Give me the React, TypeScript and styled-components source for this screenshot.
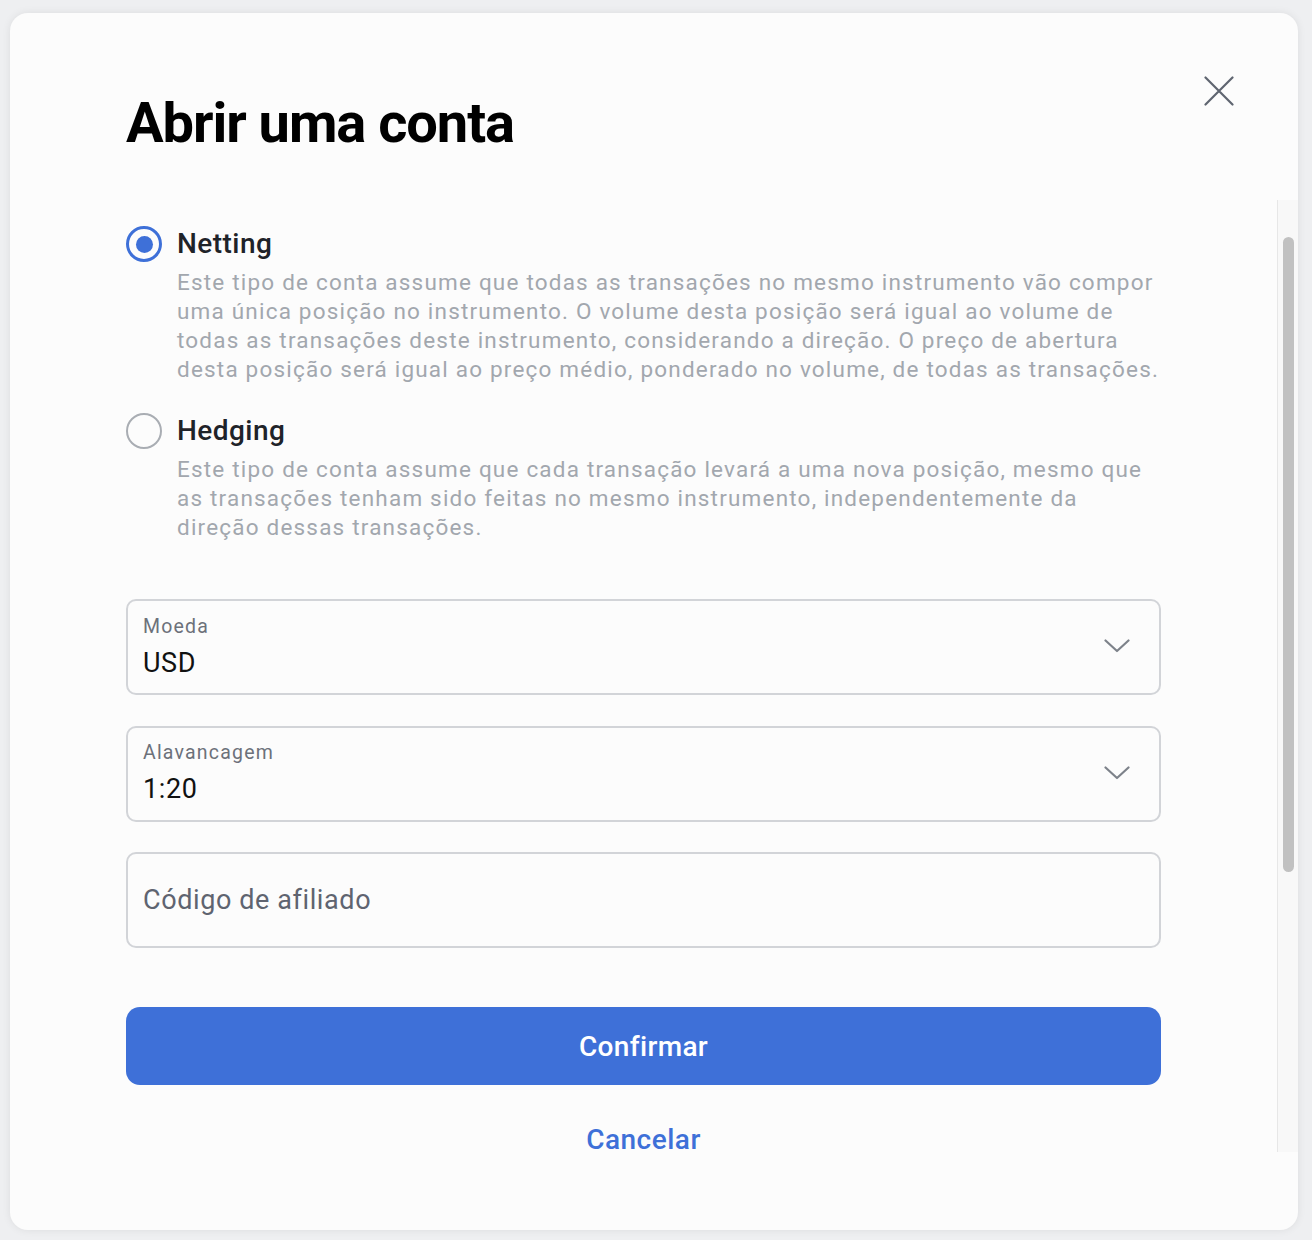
import styled, { createGlobalStyle } from 'styled-components';

const GlobalStyle = createGlobalStyle`
  html, body {
    margin: 0;
    padding: 0;
    background: #eeeff1;
  }
  body {
    font-family: Roboto, "Liberation Sans", sans-serif;
    -webkit-font-smoothing: antialiased;
  }
  * {
    box-sizing: border-box;
  }
`;

const options = [
  {
    id: 'netting',
    title: 'Netting',
    text: 'Este tipo de conta assume que todas as transações no mesmo instrumento vão compor uma única posição no instrumento. O volume desta posição será igual ao volume de todas as transações deste instrumento, considerando a direção. O preço de abertura desta posição será igual ao preço médio, ponderado no volume, de todas as transações.',
  },
  {
    id: 'hedging',
    title: 'Hedging',
    text: 'Este tipo de conta assume que cada transação levará a uma nova posição, mesmo que as transações tenham sido feitas no mesmo instrumento, independentemente da direção dessas transações.',
  },
];

const ChevronDown = () => (
  <svg width="26" height="14" viewBox="0 0 26 14" fill="none">
    <path d="M1.5 1.5L13 12L24.5 1.5" stroke="#7d828a" strokeWidth="2.2" strokeLinecap="round" strokeLinejoin="round" />
  </svg>
);

const CloseIcon = () => (
  <svg width="30" height="30" viewBox="0 0 30 30" fill="none">
    <path d="M1.5 1.5L28.5 28.5M28.5 1.5L1.5 28.5" stroke="#5f6570" strokeWidth="2.2" strokeLinecap="round" />
  </svg>
);

export default function App() {
  const selected = 'netting';
  return (
    <Page>
      <GlobalStyle />
      <Dialog>
        <Header>
          <Title>Abrir uma conta</Title>
          <CloseButton aria-label="Fechar">
            <CloseIcon />
          </CloseButton>
        </Header>
        <ScrollArea>
          <Content>
            <OptionList>
              {options.map((o) => (
                <Option key={o.id}>
                  <Radio $checked={o.id === selected} />
                  <OptionBody>
                    <OptionTitle>{o.title}</OptionTitle>
                    <OptionText>{o.text}</OptionText>
                  </OptionBody>
                </Option>
              ))}
            </OptionList>
            <Fields>
              <Field>
                <FieldInner>
                  <FieldLabel>Moeda</FieldLabel>
                  <FieldValue>USD</FieldValue>
                </FieldInner>
                <Chevron>
                  <ChevronDown />
                </Chevron>
              </Field>
              <Field>
                <FieldInner>
                  <FieldLabel>Alavancagem</FieldLabel>
                  <FieldValue>1:20</FieldValue>
                </FieldInner>
                <Chevron>
                  <ChevronDown />
                </Chevron>
              </Field>
              <Field>
                <Placeholder>Código de afiliado</Placeholder>
              </Field>
            </Fields>
            <ConfirmButton>Confirmar</ConfirmButton>
            <CancelButton>Cancelar</CancelButton>
          </Content>
          <Track>
            <Thumb />
          </Track>
        </ScrollArea>
      </Dialog>
    </Page>
  );
}

const Page = styled.div`
  width: 1312px;
  height: 1240px;
  padding: 13px 14px 10px 10px;
  display: flex;
`;

const Dialog = styled.div`
  flex: 1;
  display: flex;
  flex-direction: column;
  background: #fcfcfc;
  border-radius: 18px;
  box-shadow: 0 0 8px rgba(0, 0, 0, 0.08);
  overflow: hidden;
  padding-bottom: 78px;
`;

const Header = styled.div`
  height: 187px;
  flex-shrink: 0;
  display: flex;
  justify-content: space-between;
  align-items: flex-start;
  padding: 63px 64px 0 116px;
`;

const Title = styled.h1`
  margin: 14px 0 0;
  font-size: 56px;
  line-height: 66px;
  font-weight: 700;
  letter-spacing: -1.05px;
  color: #000;
`;

const CloseButton = styled.button`
  border: none;
  background: none;
  padding: 0;
  width: 30px;
  height: 30px;
  display: flex;
  cursor: pointer;
`;

const ScrollArea = styled.div`
  flex: 1;
  display: flex;
  min-height: 0;
`;

const Content = styled.div`
  flex: 1;
  padding: 26px 116px 0;
  display: flex;
  flex-direction: column;
`;

const Track = styled.div`
  width: 21px;
  flex-shrink: 0;
  background: #f8f8f8;
  border-left: 1px solid #e7e7e7;
  display: flex;
  justify-content: center;
`;

const Thumb = styled.div`
  margin-top: 37px;
  width: 11px;
  height: 635px;
  border-radius: 6px;
  background: #c1c1c1;
`;

const OptionList = styled.div`
  display: flex;
  flex-direction: column;
  gap: 29px;
`;

const Option = styled.div`
  display: flex;
  align-items: flex-start;
  gap: 15px;
`;

const Radio = styled.span<{ $checked: boolean }>`
  flex-shrink: 0;
  width: 36px;
  height: 36px;
  border-radius: 50%;
  border: ${({ $checked }) => ($checked ? '3px solid #3e70d8' : '2.5px solid #a9adb3')};
  display: flex;
  align-items: center;
  justify-content: center;

  &::after {
    content: '';
    width: 17px;
    height: 17px;
    border-radius: 50%;
    background: ${({ $checked }) => ($checked ? '#3e70d8' : 'transparent')};
  }
`;

const OptionBody = styled.div`
  display: flex;
  flex-direction: column;
  gap: 6px;
  margin-right: -2px;
`;

const OptionTitle = styled.div`
  font-size: 28px;
  line-height: 36px;
  font-weight: 500;
  letter-spacing: 0.45px;
  color: #1f2329;
`;

const OptionText = styled.p`
  margin: 0;
  font-size: 22.5px;
  line-height: 29px;
  letter-spacing: 1.2px;
  color: #a2a7ae;
`;

const Fields = styled.div`
  margin-top: 57px;
  display: flex;
  flex-direction: column;
  gap: 30.5px;
`;

const Field = styled.div`
  height: 96px;
  border: 2px solid #d2d4d8;
  border-radius: 10px;
  padding: 0 29px 0 15px;
  display: flex;
  align-items: center;
  justify-content: space-between;
`;

const FieldInner = styled.div`
  display: flex;
  flex-direction: column;
  gap: 8px;
`;

const FieldLabel = styled.div`
  font-size: 19.5px;
  line-height: 23px;
  letter-spacing: 1.2px;
  color: #6c717a;
`;

const FieldValue = styled.div`
  font-size: 27px;
  line-height: 34px;
  letter-spacing: 0.6px;
  color: #111;
`;

const Chevron = styled.span`
  display: flex;
  margin-bottom: 2px;
`;

const Placeholder = styled.div`
  font-size: 27px;
  line-height: 34px;
  letter-spacing: 0.6px;
  color: #5f6470;
`;

const ConfirmButton = styled.button`
  margin-top: 59px;
  height: 78px;
  flex-shrink: 0;
  border: none;
  border-radius: 14px;
  background: #3e70d8;
  color: #fff;
  font-family: inherit;
  font-size: 28px;
  font-weight: 500;
  letter-spacing: 0.35px;
  cursor: pointer;
`;

const CancelButton = styled.button`
  margin-top: 40px;
  flex-shrink: 0;
  border: none;
  background: none;
  padding: 0;
  height: 30px;
  color: #3e70d8;
  font-family: inherit;
  font-size: 28px;
  line-height: 30px;
  font-weight: 500;
  letter-spacing: 0.5px;
  cursor: pointer;
`;
